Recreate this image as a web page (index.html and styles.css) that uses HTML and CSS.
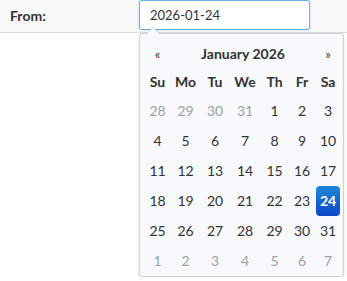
FILE: index.html
```html
<!DOCTYPE html>
<html lang="en">
<head>
    <meta charset="UTF-8">
    <meta name="viewport" content="width=device-width, initial-scale=1.0">
    <title>Date filter</title>
    <link rel="stylesheet" href="styles.css">
</head>
<body>
    <div class="filter-row">
        <label class="filter-label" for="from">From:</label>
        <input type="text" id="from" class="date-input" value="2026-01-24">
    </div>

    <div class="datepicker">
        <div class="dp-head">
            <span class="dp-nav">&laquo;</span>
            <span class="dp-title">January 2026</span>
            <span class="dp-nav">&raquo;</span>
        </div>
        <div class="dp-grid">
            <span class="dow">Su</span><span class="dow">Mo</span><span class="dow">Tu</span><span class="dow">We</span><span class="dow">Th</span><span class="dow">Fr</span><span class="dow">Sa</span>

            <span class="day old">28</span><span class="day old">29</span><span class="day old">30</span><span class="day old">31</span><span class="day">1</span><span class="day">2</span><span class="day">3</span>
            <span class="day">4</span><span class="day">5</span><span class="day">6</span><span class="day">7</span><span class="day">8</span><span class="day">9</span><span class="day">10</span>
            <span class="day">11</span><span class="day">12</span><span class="day">13</span><span class="day">14</span><span class="day">15</span><span class="day">16</span><span class="day">17</span>
            <span class="day">18</span><span class="day">19</span><span class="day">20</span><span class="day">21</span><span class="day">22</span><span class="day">23</span><span class="day active">24</span>
            <span class="day">25</span><span class="day">26</span><span class="day">27</span><span class="day">28</span><span class="day">29</span><span class="day">30</span><span class="day">31</span>
            <span class="day new">1</span><span class="day new">2</span><span class="day new">3</span><span class="day new">4</span><span class="day new">5</span><span class="day new">6</span><span class="day new">7</span>
        </div>
    </div>
</body>
</html>
```

FILE: styles.css
```css
body {
    margin: 0;
    font-family: Lato, "Liberation Sans", sans-serif;
    font-size: 14px;
    color: #333;
    background: #fff;
}

.filter-row {
    display: flex;
    align-items: flex-start;
    height: 32px;
    background: #f8f8f8;
    border-bottom: 1px solid #dcdcdc;
}

.filter-label {
    width: 129px;
    padding-left: 10px;
    line-height: 32px;
    font-size: 14px;
    font-weight: bold;
    color: #333;
}

.date-input {
    box-sizing: border-box;
    width: 171px;
    height: 30px;
    margin: 0;
    padding: 0 10px;
    font-family: inherit;
    font-size: 13px;
    color: #333;
    background: #fff;
    border: 1px solid #66afe9;
    border-radius: 3px;
    box-shadow: 0 0 2px rgba(102, 175, 233, 0.5);
    outline: none;
}

/* dropdown calendar */
.datepicker {
    position: relative;
    width: max-content;
    margin-left: 139px;
    padding: 4px 2px 0 4px;
    background: #f8f9fb;
    border: 1px solid #d0d0d0;
    border-radius: 3px;
    box-shadow: 0 2px 4px rgba(0, 0, 0, 0.08);
}

.datepicker::before,
.datepicker::after {
    content: "";
    position: absolute;
    left: 6px;
    border-left: 7px solid transparent;
    border-right: 7px solid transparent;
    border-bottom: 7px solid #d0d0d0;
}
.datepicker::before {
    top: -7px;
}
.datepicker::after {
    top: -6px;
    left: 7px;
    border-left-width: 6px;
    border-right-width: 6px;
    border-bottom: 6px solid #fff;
}

.dp-head,
.dp-grid {
    display: grid;
    grid-template-columns: 27px 29px 30px 30px 29px 26px 26px;
}

.dp-head {
    box-sizing: border-box;
    height: 28px;
    padding-top: 3px;
    align-items: center;
    text-align: center;
}
.dp-nav {
    font-size: 13px;
    color: #444;
}
.dp-title {
    grid-column: span 5;
    font-weight: bold;
    font-size: 14px;
}

.dp-grid {
    grid-auto-rows: 30px;
    align-items: center;
    justify-items: center;
}

.dow {
    font-weight: bold;
}

.day {
    width: 24px;
    height: 30px;
    line-height: 30px;
    text-align: center;
    border-radius: 4px;
}
.day.old,
.day.new {
    color: #a0a0a0;
}
.day.active {
    color: #fff;
    font-weight: bold;
    background: linear-gradient(to bottom, #1e88d6, #0a47c8);
}
```
